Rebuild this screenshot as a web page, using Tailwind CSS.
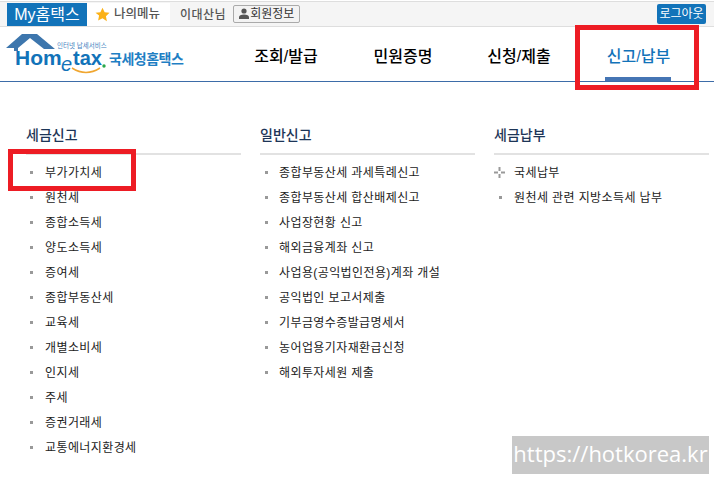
<!DOCTYPE html>
<html lang="ko">
<head>
  <meta charset="UTF-8">
  <title>국세청 홈택스</title>
  <script src="https://cdn.jsdelivr.net/npm/@tailwindcss/browser@4"></script>
</head>
<body class="relative w-[714px] h-[479px] overflow-hidden bg-white text-black font-['Liberation_Sans','Noto_Sans_CJK_KR',sans-serif]">

  <!-- Top bar -->
  <div class="mt-px h-[26px] bg-[#f5f5f5] border-y border-[#dedede] flex items-stretch pt-px pl-[7px] pr-[8px]">
    <a class="w-[80px] bg-[#1273b9] text-white text-[16px] flex items-center justify-center">My홈택스</a>
    <a class="w-[83px] bg-white flex items-center pl-[8px] gap-[4px] text-[12.500px] font-medium text-[#555]">
      <svg width="15" height="15" viewBox="0 0 24 24"><path fill="#fbb117" d="M12 1l3.400 7.300 7.800 1-5.700 5.400 1.500 7.900L12 17.800l-7 3.800 1.500-7.900L.8 9.300l7.800-1z"/></svg>
      나의메뉴
    </a>
    <span class="ml-[10px] self-center text-[12px] font-medium text-[#555] tracking-[0.500px]">이대산님</span>
    <a class="ml-[7px] mb-[2px] self-center h-[18px] w-[67px] bg-[#f3f3f3] border border-[#aaa] rounded-[2px] flex items-center pl-[5px] gap-[1px] text-[12px] text-[#333]">
      <svg width="10" height="11" viewBox="0 0 10 11"><circle cx="5" cy="3" r="2.600" fill="#555"/><path fill="#555" d="M0 11V9.300C0 7.500 2 6.500 5 6.500s5 1 5 2.800V11z"/></svg>
      회원정보
    </a>
    <a class="ml-auto mb-[2px] self-center h-[20px] w-[49px] bg-[#1273b9] rounded-[2px] text-white text-[12px] flex items-center justify-center">로그아웃</a>
  </div>

  <!-- Logo and main nav -->
  <header class="h-[55px] border-b border-[#3d6ca8] flex">
    <div class="w-[228px] relative shrink-0">
      <svg class="absolute left-0 top-0" width="110" height="54" viewBox="0 0 110 54">
        <path fill="#3d76ad" d="M6 21 L22 7 H37 L55 22 H44 L30 11 L18 21 V24 H14 V21z"/>
        <path fill="none" stroke="#f0a630" stroke-width="1.500" d="M72 41 Q86 50 100 41"/>
        <circle cx="104" cy="39" r="1.700" fill="#2aa84a"/>
      </svg>
      <span class="absolute left-[57px] top-[15px] text-[6.500px] leading-[7px] text-[#3f7fc0] whitespace-nowrap">인터넷 납세서비스</span>
      <span class="absolute left-[15px] top-[23px] text-[21px] leading-[16px] font-bold text-[#1273b9] whitespace-nowrap">Hom</span>
      <span class="absolute left-[61px] top-[29px] text-[20px] leading-[16px] italic text-[#1273b9]">e</span>
      <span class="absolute left-[73px] top-[23px] text-[20px] leading-[16px] font-bold text-[#1273b9] whitespace-nowrap">tax</span>
      <span class="absolute left-[109px] top-[22px] text-[14px] leading-[20px] font-bold text-[#1f7fc4] tracking-[-0.500px] whitespace-nowrap">국세청홈택스</span>
    </div>
    <nav class="flex text-[16px] font-medium">
      <a class="w-[116px] pt-[6px] flex items-center justify-center">조회/발급</a>
      <a class="w-[118px] pt-[6px] flex items-center justify-center">민원증명</a>
      <a class="w-[114px] pt-[6px] flex items-center justify-center">신청/제출</a>
      <a class="relative w-[125px] pt-[6px] flex items-center justify-center text-[#1273b9]">
        신고/납부
        <span class="absolute left-[29px] bottom-0 w-[66px] h-[4px] bg-[#4575b4]"></span>
      </a>
    </nav>
  </header>

  <!-- Menu columns -->
  <main class="flex gap-[19px] pl-[26px] pt-[44px]">
    <section class="w-[215px]">
      <h2 class="text-[14px] leading-[19px] font-medium text-[#1d3557] h-[29px] border-b-2 border-[#e2e2e2]">세금신고</h2>
      <ul class="pt-[5px] text-[12px] tracking-[0.400px] text-[#222]">
        <li class="h-[25px] flex items-center"><i class="size-[3px] bg-[#999] ml-[4px] mr-[12px]"></i>부가가치세</li>
        <li class="h-[25px] flex items-center"><i class="size-[3px] bg-[#999] ml-[4px] mr-[12px]"></i>원천세</li>
        <li class="h-[25px] flex items-center"><i class="size-[3px] bg-[#999] ml-[4px] mr-[12px]"></i>종합소득세</li>
        <li class="h-[25px] flex items-center"><i class="size-[3px] bg-[#999] ml-[4px] mr-[12px]"></i>양도소득세</li>
        <li class="h-[25px] flex items-center"><i class="size-[3px] bg-[#999] ml-[4px] mr-[12px]"></i>증여세</li>
        <li class="h-[25px] flex items-center"><i class="size-[3px] bg-[#999] ml-[4px] mr-[12px]"></i>종합부동산세</li>
        <li class="h-[25px] flex items-center"><i class="size-[3px] bg-[#999] ml-[4px] mr-[12px]"></i>교육세</li>
        <li class="h-[25px] flex items-center"><i class="size-[3px] bg-[#999] ml-[4px] mr-[12px]"></i>개별소비세</li>
        <li class="h-[25px] flex items-center"><i class="size-[3px] bg-[#999] ml-[4px] mr-[12px]"></i>인지세</li>
        <li class="h-[25px] flex items-center"><i class="size-[3px] bg-[#999] ml-[4px] mr-[12px]"></i>주세</li>
        <li class="h-[25px] flex items-center"><i class="size-[3px] bg-[#999] ml-[4px] mr-[12px]"></i>증권거래세</li>
        <li class="h-[25px] flex items-center"><i class="size-[3px] bg-[#999] ml-[4px] mr-[12px]"></i>교통에너지환경세</li>
      </ul>
    </section>
    <section class="w-[215px]">
      <h2 class="text-[14px] leading-[19px] font-medium text-[#1d3557] h-[29px] border-b-2 border-[#e2e2e2]">일반신고</h2>
      <ul class="pt-[5px] text-[12px] tracking-[0.400px] text-[#222]">
        <li class="h-[25px] flex items-center"><i class="size-[3px] bg-[#999] ml-[5px] mr-[11px]"></i>종합부동산세 과세특례신고</li>
        <li class="h-[25px] flex items-center"><i class="size-[3px] bg-[#999] ml-[5px] mr-[11px]"></i>종합부동산세 합산배제신고</li>
        <li class="h-[25px] flex items-center"><i class="size-[3px] bg-[#999] ml-[5px] mr-[11px]"></i>사업장현황 신고</li>
        <li class="h-[25px] flex items-center"><i class="size-[3px] bg-[#999] ml-[5px] mr-[11px]"></i>해외금융계좌 신고</li>
        <li class="h-[25px] flex items-center"><i class="size-[3px] bg-[#999] ml-[5px] mr-[11px]"></i>사업용(공익법인전용)계좌 개설</li>
        <li class="h-[25px] flex items-center"><i class="size-[3px] bg-[#999] ml-[5px] mr-[11px]"></i>공익법인 보고서제출</li>
        <li class="h-[25px] flex items-center"><i class="size-[3px] bg-[#999] ml-[5px] mr-[11px]"></i>기부금영수증발급명세서</li>
        <li class="h-[25px] flex items-center"><i class="size-[3px] bg-[#999] ml-[5px] mr-[11px]"></i>농어업용기자재환급신청</li>
        <li class="h-[25px] flex items-center"><i class="size-[3px] bg-[#999] ml-[5px] mr-[11px]"></i>해외투자세원 제출</li>
      </ul>
    </section>
    <section class="w-[215px]">
      <h2 class="text-[14px] leading-[19px] font-medium text-[#1d3557] h-[29px] border-b-2 border-[#e2e2e2]">세금납부</h2>
      <ul class="pt-[5px] text-[12px] tracking-[0.400px] text-[#222]">
        <li class="h-[25px] flex items-center">
          <svg class="mr-[9px]" width="11" height="11" viewBox="0 0 11 11"><path fill="#999" d="M4.500 0h2v4h-2zM4.500 7h2v4h-2zM0 4.500h4v2H0zM7 4.500h4v2H7z"/></svg>
          국세납부
        </li>
        <li class="h-[25px] flex items-center"><i class="size-[3px] bg-[#999] ml-[5px] mr-[12px]"></i>원천세 관련 지방소득세 납부</li>
      </ul>
    </section>
  </main>

  <!-- Red highlight boxes and watermark lie over the page -->
  <div class="absolute left-[575px] top-[25px] w-[124px] h-[65px] border-[5px] border-[#ed1c24]"></div>
  <div class="absolute left-[8px] top-[149px] w-[128px] h-[42px] border-[5px] border-[#ed1c24]"></div>
  <div class="absolute left-[512px] top-[436px] w-[197px] h-[38px] bg-[#c8c8c8] text-white text-[22px] leading-[34px] text-center whitespace-nowrap font-['Open_Sans',sans-serif]">https://hotkorea.kr</div>
</body>
</html>
